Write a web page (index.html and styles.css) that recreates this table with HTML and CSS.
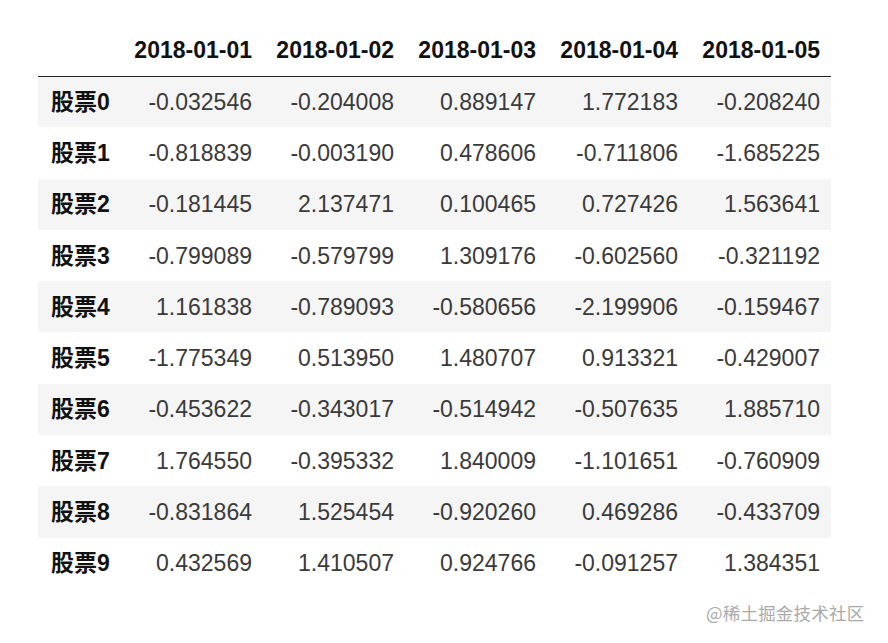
FILE: index.html
```html
<!DOCTYPE html>
<html lang="zh">
<head>
<meta charset="utf-8">
<link rel="stylesheet" href="styles.css">
</head>
<body>
<div class="page">
<table class="df">
<thead>
<tr><th class="corner"></th><th>2018-01-01</th><th>2018-01-02</th><th>2018-01-03</th><th>2018-01-04</th><th>2018-01-05</th></tr>
</thead>
<tbody>
<tr><th>股票0</th><td>-0.032546</td><td>-0.204008</td><td>0.889147</td><td>1.772183</td><td>-0.208240</td></tr>
<tr><th>股票1</th><td>-0.818839</td><td>-0.003190</td><td>0.478606</td><td>-0.711806</td><td>-1.685225</td></tr>
<tr><th>股票2</th><td>-0.181445</td><td>2.137471</td><td>0.100465</td><td>0.727426</td><td>1.563641</td></tr>
<tr><th>股票3</th><td>-0.799089</td><td>-0.579799</td><td>1.309176</td><td>-0.602560</td><td>-0.321192</td></tr>
<tr><th>股票4</th><td>1.161838</td><td>-0.789093</td><td>-0.580656</td><td>-2.199906</td><td>-0.159467</td></tr>
<tr><th>股票5</th><td>-1.775349</td><td>0.513950</td><td>1.480707</td><td>0.913321</td><td>-0.429007</td></tr>
<tr><th>股票6</th><td>-0.453622</td><td>-0.343017</td><td>-0.514942</td><td>-0.507635</td><td>1.885710</td></tr>
<tr><th>股票7</th><td>1.764550</td><td>-0.395332</td><td>1.840009</td><td>-1.101651</td><td>-0.760909</td></tr>
<tr><th>股票8</th><td>-0.831864</td><td>1.525454</td><td>-0.920260</td><td>0.469286</td><td>-0.433709</td></tr>
<tr><th>股票9</th><td>0.432569</td><td>1.410507</td><td>0.924766</td><td>-0.091257</td><td>1.384351</td></tr>
</tbody>
</table>
<div class="mark">@稀土掘金技术社区</div>
</div>
</body>
</html>
```
FILE: styles.css
```css
html, body {
  margin: 0;
  padding: 0;
  background: #ffffff;
}
.page {
  width: 888px;
  height: 643px;
  padding: 24px 0 0 38px;
  box-sizing: border-box;
  font-family: "Liberation Sans", Arial, "Noto Sans CJK SC", sans-serif;
}
.df {
  border-collapse: collapse;
  border-spacing: 0;
  font-size: 23px;
  table-layout: fixed;
}
.df th, .df td {
  padding: 0 11px 0 13px;
  height: 51.3px;
  line-height: 26px;
  box-sizing: border-box;
  vertical-align: middle;
}
.df thead th {
  height: 52px;
  font-weight: bold;
  color: #111;
  text-align: right;
  width: 142px;
  border-bottom: 1.5px solid #222;
}
.df thead th.corner {
  width: 83px;
}
.df tbody th {
  text-align: left;
  font-weight: bold;
  color: #111;
  width: 83px;
}
.df td {
  text-align: right;
  color: #3a3a3a;
}
.df tbody tr:nth-child(odd) {
  background: #f5f5f5;
}
.mark {
  position: absolute;
  left: 706px;
  top: 600px;
  font-size: 17.5px;
  color: #aaaaaa;
  letter-spacing: 0.2px;
  font-family: "Noto Sans CJK SC", sans-serif;
}
```
